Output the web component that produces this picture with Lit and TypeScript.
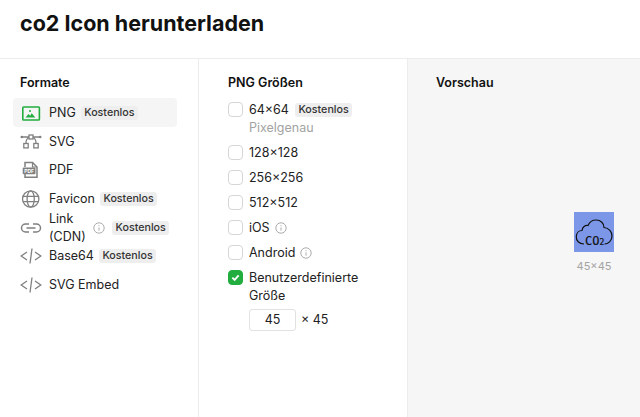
import { LitElement, html, css, svg } from 'lit';
import { customElement } from 'lit/decorators.js';

const info = html`<svg class="info" viewBox="0 0 12 12" fill="none" stroke="#a3a3a3" stroke-width="0.9">
  <circle cx="6" cy="6" r="5.2"></circle>
  <path d="M6 5.400v3.200M6 3.200v1"></path>
</svg>`;

const icons: Record<string, unknown> = {
  png: svg`<rect x="2.800" y="6" width="16.600" height="13" fill="none" stroke="#22ad3f" stroke-width="1.600" rx="0.800"></rect>
    <path d="M5.500 16.500l3-3.600 1.700 1.800 1.500-2.400 3.600 4.200z" fill="#22ad3f"></path>
    <circle cx="10" cy="10" r="1" fill="#22ad3f"></circle>`,
  svg: svg`<g fill="none" stroke="#808080" stroke-width="1.300">
    <path d="M2 7h7M13 7h7M9 7.500C6.800 8.500 6 10.500 6 13M13 7.500c2.200 1 3 3 3 5.500"></path>
    <rect x="9" y="5" width="4" height="4"></rect>
    <rect x="3.800" y="13.500" width="4.400" height="4.400"></rect>
    <rect x="13.800" y="13.500" width="4.400" height="4.400"></rect></g>
    <circle cx="1.800" cy="7" r="1.300" fill="#808080"></circle>
    <circle cx="20.200" cy="7" r="1.300" fill="#808080"></circle>`,
  pdf: svg`<path d="M5 9V4.500h7.500l4.500 4.500v10.200H5V16" fill="none" stroke="#808080" stroke-width="1.500"></path>
    <path d="M12.500 4.500V9H17" fill="none" stroke="#808080" stroke-width="1.200"></path>
    <rect x="2.700" y="9.500" width="12.800" height="6.800" rx="1" fill="#808080"></rect>
    <text x="9.100" y="14.900" font-size="5" font-weight="700" text-anchor="middle" fill="#fff" font-family="Inter, sans-serif">PDF</text>`,
  favicon: svg`<g fill="none" stroke="#808080" stroke-width="1.300"><circle cx="10.700" cy="12" r="8.200"></circle>
    <ellipse cx="10.700" cy="12" rx="3.600" ry="8.200"></ellipse><path d="M3 9.300h15.400M3 14.700h15.400"></path></g>`,
  link: svg`<path d="M9 8H5.500a4 4 0 0 0 0 8H9M13 8h3.500a4 4 0 0 1 0 8H13M6.500 12h9" fill="none" stroke="#808080" stroke-width="1.500"></path>`,
  code: svg`<path d="M7 8 1.200 12 7 16M15 8l5.800 4L15 16M12 4.500l-2 15" fill="none" stroke="#808080" stroke-width="1.300"></path>`,
};

const formats = [
  { id: 'png', name: 'PNG', free: true, active: true },
  { id: 'svg', name: 'SVG' },
  { id: 'pdf', name: 'PDF' },
  { id: 'favicon', name: 'Favicon', free: true },
  { id: 'link', name: 'Link (CDN)', free: true, info: true },
  { id: 'code', name: 'Base64', free: true },
  { id: 'code', name: 'SVG Embed' },
];

const sizes = [
  { label: '64×64', free: true, sub: 'Pixelgenau' },
  { label: '128×128' },
  { label: '256×256' },
  { label: '512×512' },
  { label: 'iOS', info: true },
  { label: 'Android', info: true },
];

@customElement('app-root')
export class AppRoot extends LitElement {
  static styles = css`
    :host {
      display: block;
      width: 640px;
      height: 417px;
      overflow: hidden;
      background: #fff;
      color: #222;
      font-family: Inter, sans-serif;
      font-size: 12.500px;
      line-height: 18px;
    }

    header {
      height: 59px;
      box-sizing: border-box;
      padding: 11px 20px 0;
      border-bottom: 1px solid #ececec;
    }

    h1 {
      margin: 0;
      font-size: 21.500px;
      line-height: 24px;
      font-weight: 700;
      color: #111;
    }

    main {
      display: grid;
      grid-template-columns: 199px 209px 1fr;
      height: 358px;
    }

    section {
      box-sizing: border-box;
      border-right: 1px solid #ececec;
    }

    h2 {
      margin: 0;
      font-size: 12.500px;
      line-height: 18px;
      font-weight: 600;
      color: #111;
    }

    .formats {
      padding: 15px 21px 0 13px;
    }

    .formats h2 {
      padding-left: 7px;
      margin-bottom: 6px;
    }

    .row {
      display: flex;
      align-items: center;
      box-sizing: border-box;
      height: 28.700px;
      padding: 1px 0 0 7px;
      border-radius: 4px;
      white-space: nowrap;
    }

    .row.active {
      background: #f5f5f5;
    }

    .ficon {
      width: 22px;
      height: 24px;
      flex: none;
      margin-right: 7px;
    }

    .row.wrap .name {
      white-space: normal;
      width: 38px;
    }

    .badge {
      margin-left: 5px;
      padding: 0 3.500px;
      font-size: 10.700px;
      line-height: 14px;
      font-weight: 500;
      background: #eeeeee;
      border-radius: 3px;
      color: #333;
    }

    .label .badge {
      margin-left: 6px;
    }

    .info {
      width: 12px;
      height: 12px;
      flex: none;
      margin-left: 5px;
    }

    .row .info {
      margin-left: 6px;
      margin-right: 2px;
    }

    .sizes {
      padding: 15px 20px 0 29px;
    }

    .sizes h2 {
      margin-bottom: 9px;
    }

    .size {
      display: grid;
      grid-template-columns: 15px 1fr;
      column-gap: 6px;
      margin-bottom: 7px;
    }

    .box {
      width: 15px;
      height: 15px;
      box-sizing: border-box;
      margin-top: 1px;
      background: #fff;
      border: 1.500px solid #d6d6d6;
      border-radius: 4px;
    }

    .box.checked {
      background: #22ad3f;
      border-color: #22ad3f;
      display: flex;
      align-items: center;
      justify-content: center;
    }

    .box svg {
      width: 9px;
      height: 9px;
    }

    .label {
      display: flex;
      align-items: center;
    }

    .sub {
      grid-column: 2;
      color: #a3a3a3;
    }

    .custom {
      grid-column: 2;
      display: flex;
      align-items: center;
      gap: 5px;
      margin-top: 4px;
    }

    .field {
      box-sizing: border-box;
      width: 47px;
      height: 22px;
      line-height: 20px;
      text-align: center;
      background: #fff;
      border: 1px solid #e2e2e2;
      border-radius: 3px;
    }

    .preview {
      border-right: 0;
      background: #f6f6f6;
      padding: 15px 0 0 28px;
      position: relative;
    }

    .tile {
      position: absolute;
      left: 166px;
      top: 153px;
      width: 40px;
      text-align: center;
    }

    .tile svg {
      display: block;
      width: 40px;
      height: 40px;
      background: #7c96e8;
    }

    .tile span {
      display: block;
      margin: 7px -5px 0;
      font-size: 11px;
      line-height: 14px;
      color: #a3a3a3;
    }
  `;

  render() {
    return html`
      <header><h1>co2 Icon herunterladen</h1></header>
      <main>
        <section class="formats">
          <h2>Formate</h2>
          ${formats.map(
            (f) => html`
              <div class="row ${f.active ? 'active' : ''} ${f.info ? 'wrap' : ''}">
                <svg class="ficon" viewBox="0 0 22 24">${icons[f.id]}</svg>
                <span class="name">${f.name}</span>
                ${f.info ? info : ''}
                ${f.free ? html`<span class="badge">Kostenlos</span>` : ''}
              </div>
            `
          )}
        </section>
        <section class="sizes">
          <h2>PNG Größen</h2>
          ${sizes.map(
            (s) => html`
              <div class="size">
                <div class="box"></div>
                <div class="label">
                  ${s.label}
                  ${s.free ? html`<span class="badge">Kostenlos</span>` : ''}
                  ${s.info ? info : ''}
                </div>
                ${s.sub ? html`<div class="sub">${s.sub}</div>` : ''}
              </div>
            `
          )}
          <div class="size">
            <div class="box checked">
              <svg viewBox="0 0 10 10" fill="none" stroke="#fff" stroke-width="2">
                <path d="M1.500 5.200 4 7.600 8.500 2.600"></path>
              </svg>
            </div>
            <div>Benutzerdefinierte Größe</div>
            <div class="custom"><div class="field">45</div>× 45</div>
          </div>
        </section>
        <section class="preview">
          <h2>Vorschau</h2>
          <div class="tile">
            <svg viewBox="0 0 40 40">
              <path
                d="M10 32C5 32 2 28.500 2.300 24.500 2.500 21 5 18.500 8 18.500 8.500 15 11 13 14 13.500 15.500 10 18.500 8 22 8c5 0 8 3.500 8 7.500 5 .5 8 4.500 8 8.500 0 5-4 8-7.500 8"
                fill="none"
                stroke="#111"
                stroke-width="1.200"
              ></path>
              <text x="11" y="33" font-size="12" fill="#111" stroke="#111" stroke-width="0.2" font-family="'DejaVu Sans Mono', monospace">CO<tspan font-size="8">2</tspan></text>
            </svg>
            <span>45×45</span>
          </div>
        </section>
      </main>
    `;
  }
}
